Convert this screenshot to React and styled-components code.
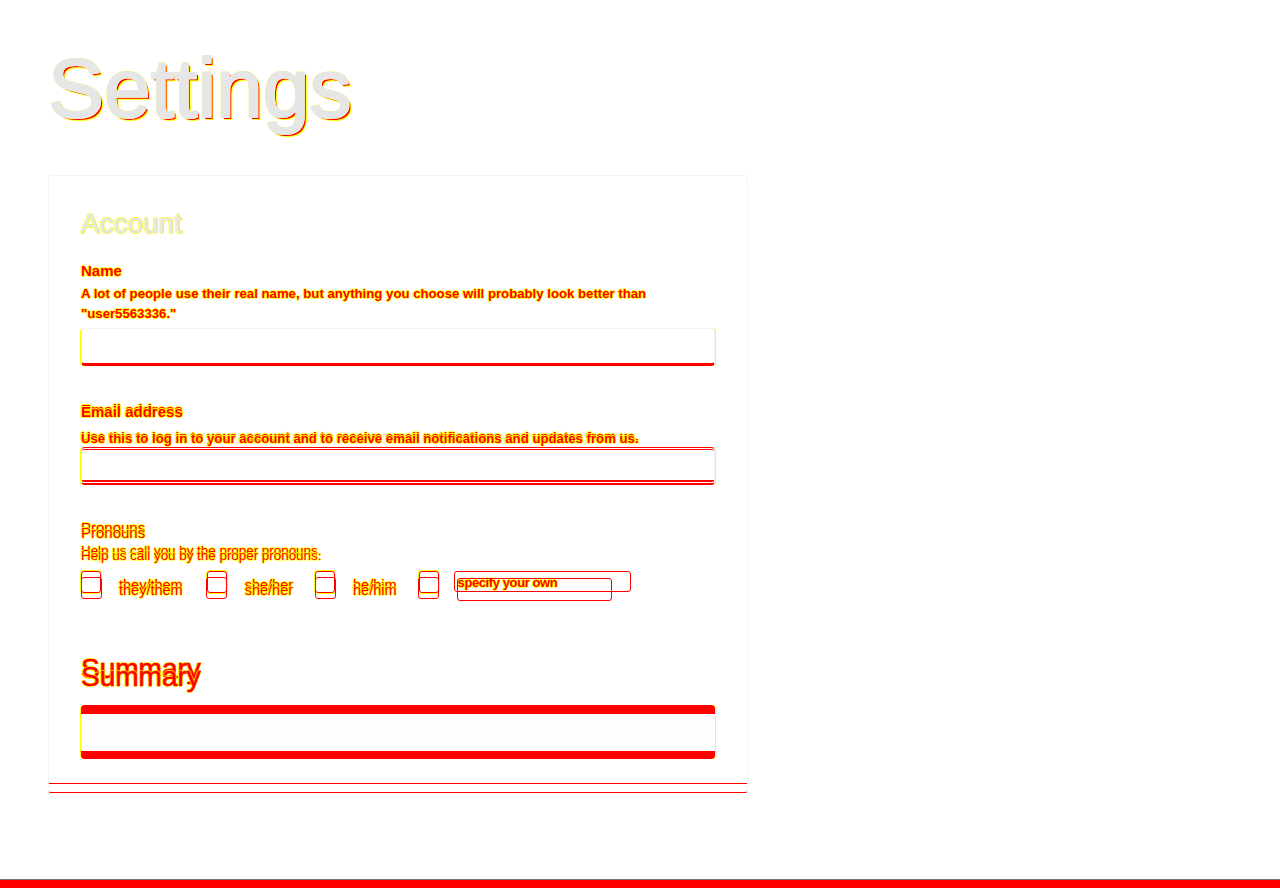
import styled, { createGlobalStyle } from 'styled-components';

const Global = createGlobalStyle`
  html, body { margin: 0; padding: 0; background: #fff; }
  body { font-family: "Liberation Sans", Arial, sans-serif; }
`;

const outline = (c) =>
  `1px 0 0 ${c}, -1px 0 0 ${c}, 0 1px 0 ${c}, 0 -1px 0 ${c}`;

const Page = styled.div`
  min-height: 100vh;
  display: flex;
  flex-direction: column;
  padding: 46px 0 0 48px;
  box-sizing: border-box;
`;

const Title = styled.h1`
  margin: 0 0 45px;
  font-size: 84px;
  line-height: 1;
  font-weight: 400;
  color: #e6e6e6;
  -webkit-text-stroke: 2px #e6e6e6;
  text-shadow: ${outline('#ff0')}, 2px 2px 0 #f00, 3px 3px 0 #ff0;
`;

const Card = styled.section`
  width: 700px;
  box-sizing: border-box;
  border: 1px solid #f4f4f4;
  border-bottom: 1px solid #f00;
  border-radius: 3px;
`;

const Body = styled.div`
  padding: 32px 32px 24px;
`;

const Foot = styled.div`
  height: 8px;
  border-top: 1px solid #f00;
`;

const Heading = styled.h2`
  position: relative;
  margin: ${(p) => p.$top || 0}px 0 ${(p) => p.$gap || 26}px;
  font-size: 28px;
  line-height: 1.15;
  font-weight: 400;
  color: ${(p) => (p.$ghost ? '#f00' : '#e6e6e6')};
  -webkit-text-stroke: 0.6px ${(p) => (p.$ghost ? '#f00' : '#e6e6e6')};
  text-shadow: ${outline('#ff0')};
  &::after {
    content: ${(p) => (p.$ghost ? 'attr(data-text)' : 'none')};
    position: absolute;
    left: 0;
    top: ${(p) => p.$ghost || 0}px;
  }
`;

const Field = styled.div`
  margin-bottom: ${(p) => p.$mb || 38}px;
`;

const Label = styled.div`
  position: relative;
  font-size: 15px;
  font-weight: ${(p) => (p.$thin ? 400 : 700)};
  line-height: 20px;
  color: #f00;
  text-shadow: ${outline('#ff0')};
  &::after {
    content: ${(p) => (p.$ghost ? 'attr(data-text)' : 'none')};
    position: absolute;
    left: 0;
    top: ${(p) => p.$ghost || 0}px;
  }
`;

const Hint = styled.p`
  position: relative;
  margin: ${(p) => p.$top ?? 6}px 0 ${(p) => p.$bottom ?? 4}px;
  font-size: ${(p) => (p.$thin ? '13.4px' : '13.2px')};
  line-height: ${(p) => p.$lh || 21}px;
  font-weight: ${(p) => (p.$thin ? 400 : 700)};
  color: #f00;
  text-shadow: ${outline('#ff0')};
  &::after {
    content: ${(p) => (p.$ghost ? 'attr(data-text)' : 'none')};
    position: absolute;
    left: 0;
    top: ${(p) => p.$ghost || 0}px;
  }
`;

const Input = styled.div`
  height: 38px;
  box-sizing: border-box;
  border: 1px solid #f3f3f3;
  border-radius: 4px;
  border-top: ${(p) => (p.$double ? '3px double #f00' : '1px solid #f3f3f3')};
  border-bottom: ${(p) => (p.$double ? '5px double #f00' : '3px solid #f00')};
  box-shadow: -1px 0 0 #ff0, 1px 0 0 #ff0;
`;

const Options = styled.div`
  display: flex;
  align-items: center;
  margin-top: 10px;
  height: 28px;
`;

const Option = styled.label`
  display: flex;
  align-items: center;
  margin-right: ${(p) => p.$mr ?? 24}px;
`;

const Box = styled.span`
  position: relative;
  width: 18px;
  height: 20px;
  border: 1.5px solid #f00;
  border-radius: 3px;
  box-shadow: 0 0 0 1px #ff0;
  margin-top: -6px;
  margin-right: 18px;
  &::after {
    content: '';
    position: absolute;
    left: -1.5px;
    right: -1.5px;
    top: 5px;
    height: 20px;
    border: 1px solid #f00;
    border-radius: 3px;
  }
`;

const OptText = styled.span`
  position: relative;
  font-size: 14.5px;
  color: #f00;
  text-shadow: ${outline('#ff0')};
  &::after {
    content: attr(data-text);
    position: absolute;
    left: 0;
    top: 5px;
  }
`;

const Specify = styled.div`
  position: relative;
  width: 177px;
  height: 21px;
  margin-top: -7px;
  margin-left: -3px;
  box-sizing: border-box;
  border: 1px solid #f00;
  border-radius: 3px;
  padding: 3px 3px;
  font-size: 13px;
  font-weight: 700;
  letter-spacing: -0.4px;
  color: #f00;
  text-shadow: ${outline('#ff0')};
  &::after {
    content: '';
    position: absolute;
    left: 2px;
    top: 6px;
    width: 153px;
    height: 21px;
    border: 1px solid #f00;
    border-radius: 3px;
  }
`;

const SummaryBox = styled.div`
  height: 54px;
  box-sizing: border-box;
  border-radius: 4px;
  background: #fdfdfd;
  border-top: 9px solid #f00;
  border-bottom: 8px solid #f00;
  box-shadow: -1px 0 0 #ff0, 1px 0 0 #ff0;
`;

const BottomBar = styled.div`
  margin: auto 0 0 -48px;
  height: 8px;
  border-top: 1px solid #777;
  background: #f00;
`;

const pronouns = [
  { text: 'they/them', mr: 24 },
  { text: 'she/her', mr: 22 },
  { text: 'he/him', mr: 22 },
];

export default function App() {
  return (
    <Page>
      <Global />
      <Title>Settings</Title>
      <Card>
        <Body>
          <Heading $gap={21}>Account</Heading>
          <Field $mb={34}>
            <Label>Name</Label>
            <Hint $top={3} $lh={20}>
              A lot of people use their real name, but anything you choose will probably look better than
              "user5563336."
            </Hint>
            <Input />
          </Field>
          <Field $mb={33}>
            <Label data-text="Email address" $ghost={2}>Email address</Label>
            <Hint data-text="Use this to log in to your account and to receive email notifications and updates from us." $ghost={2} $top={6} $bottom={0}>
              Use this to log in to your account and to receive email notifications and updates from us.
            </Hint>
            <Input $double />
          </Field>
          <Field $mb={54}>
            <Label data-text="Pronouns" $ghost={5} $thin>Pronouns</Label>
            <Hint data-text="Help us call you by the proper pronouns." $ghost={5} $thin $top={2} $bottom={0}>
              Help us call you by the proper pronouns.
            </Hint>
            <Options>
              {pronouns.map((p) => (
                <Option key={p.text} $mr={p.mr}>
                  <Box />
                  <OptText data-text={p.text}>{p.text}</OptText>
                </Option>
              ))}
              <Option $mr={0}>
                <Box />
                <Specify>specify your own</Specify>
              </Option>
            </Options>
          </Field>
          <Heading data-text="Summary" $ghost={8} $top={2} $gap={20}>Summary</Heading>
          <SummaryBox />
        </Body>
        <Foot />
      </Card>
      <BottomBar />
    </Page>
  );
}
